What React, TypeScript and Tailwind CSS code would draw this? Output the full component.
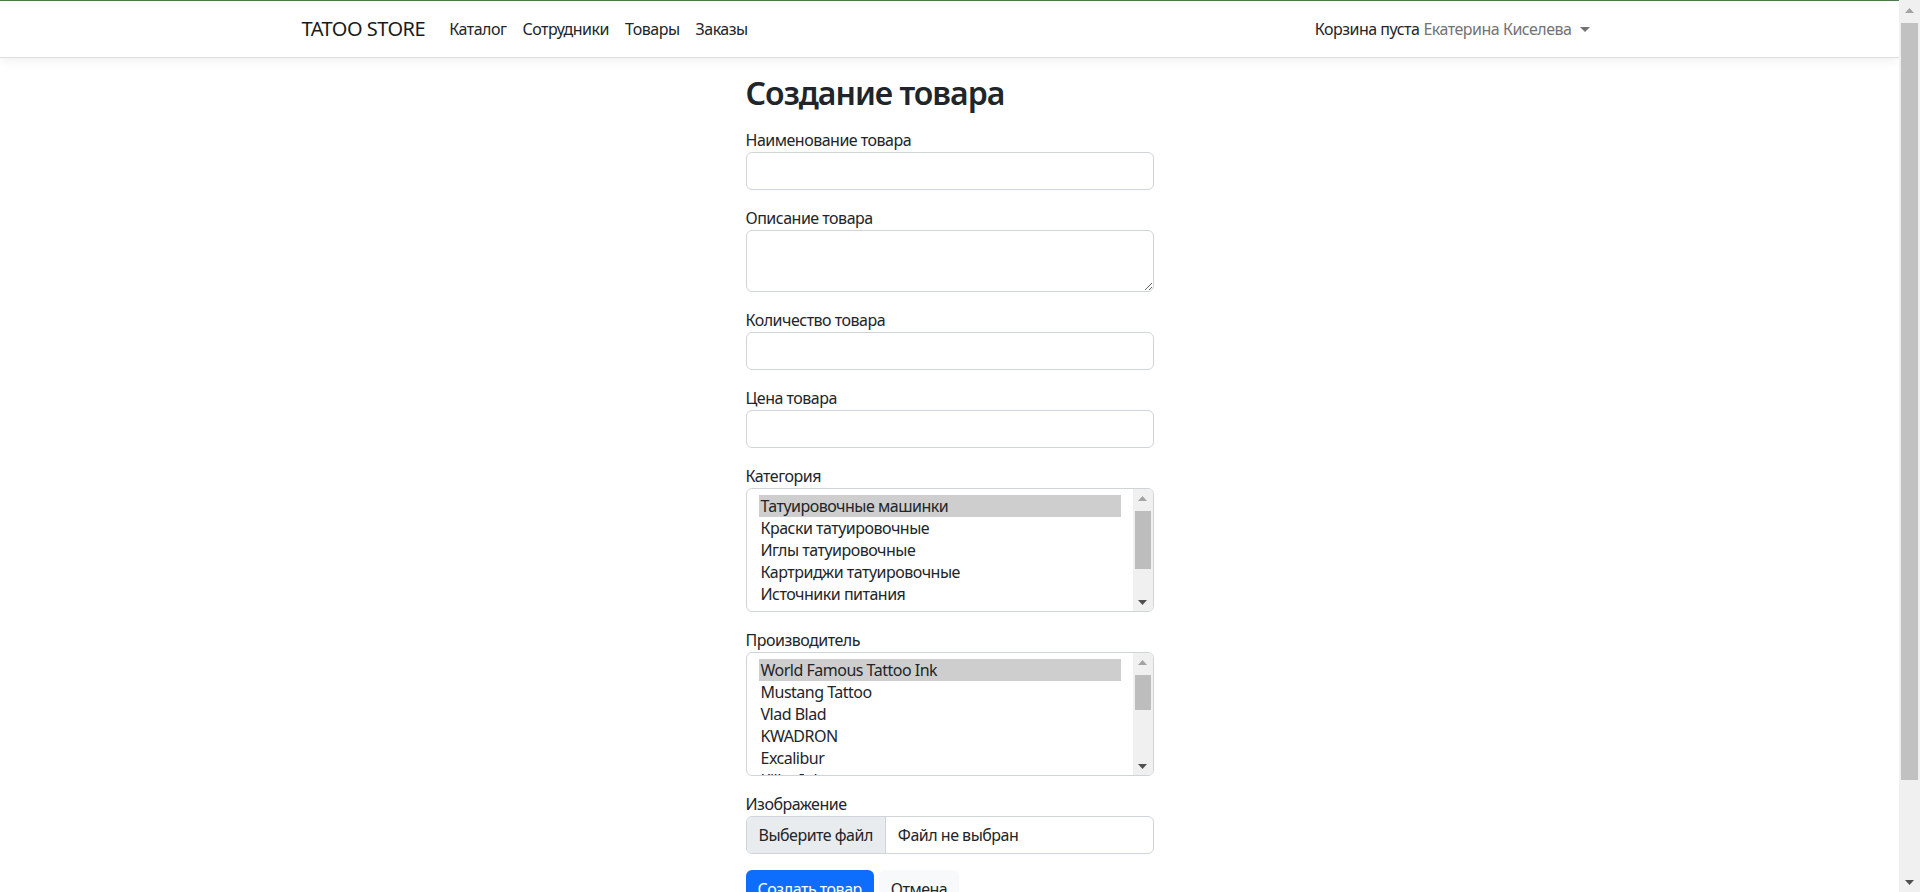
import React from "react";

const FONT = { fontFamily: '"Noto Sans", "Open Sans", Arial, sans-serif' };

function UpArrow({ color }: { color: string }) {
  return (
    <svg width="9" height="5" viewBox="0 0 9 5">
      <path d="M0 5 L4.5 0 L9 5 Z" fill={color} />
    </svg>
  );
}

function DownArrow({ color }: { color: string }) {
  return (
    <svg width="9" height="5" viewBox="0 0 9 5">
      <path d="M0 0 L4.5 5 L9 0 Z" fill={color} />
    </svg>
  );
}

function ListBox({
  items,
  thumbTop,
  thumbHeight,
}: {
  items: string[];
  thumbTop: number;
  thumbHeight: number;
}) {
  return (
    <div className="h-[124px] border border-[#ced4da] rounded-[6px] flex overflow-hidden bg-white">
      <div className="flex-1 pt-[6px] pl-3 pr-[12px] overflow-hidden">
        {items.map((it, i) => (
          <div
            key={it}
            className={`h-[22px] leading-[22px] px-[2px] text-[16px] text-[#212529] whitespace-nowrap ${
              i === 0 ? "bg-[#cecece]" : ""
            }`}
          >
            {it}
          </div>
        ))}
      </div>
      <div className="w-[20px] bg-[#f0f0f0] flex flex-col items-center">
        <div className="h-[18px] flex items-center justify-center">
          <UpArrow color="#a3a3a3" />
        </div>
        <div style={{ height: thumbTop - 18 }} />
        <div className="w-[16px] bg-[#bdbdbd]" style={{ height: thumbHeight }} />
        <div className="flex-1" />
        <div className="h-[18px] flex items-center justify-center">
          <DownArrow color="#505050" />
        </div>
      </div>
    </div>
  );
}

function Label({ children }: { children: React.ReactNode }) {
  return <div className="text-[16px] leading-[24px] text-[#212529]">{children}</div>;
}

function Input() {
  return <div className="h-[38px] border border-[#ced4da] rounded-[6px] bg-white" />;
}

export default function App() {
  return (
    <div
      className="w-[1920px] h-[892px] flex overflow-hidden bg-white tracking-[-0.5px]"
      style={FONT}
    >
      <div className="w-[1899px] flex flex-col overflow-hidden">
        <div className="h-px bg-[#4c7c50]" />
        <nav className="h-[57px] border-b border-[#dedede] bg-white shadow-[0_3px_10px_rgba(0,0,0,0.06)] relative z-10">
          <div className="w-[1320px] mx-auto px-3 h-full flex items-center">
            <span className="text-[20px] text-[#1a1a1a] mr-4">TATOO STORE</span>
            <div className="flex text-[16px] text-[#212529]">
              <span className="px-2">Каталог</span>
              <span className="px-2">Сотрудники</span>
              <span className="px-2">Товары</span>
              <span className="px-2">Заказы</span>
            </div>
            <div className="ml-auto flex items-center text-[16px]">
              <span className="text-[#212529]">Корзина пуста</span>
              <span className="pl-1 pr-2 text-[#737373] flex items-center">
                Екатерина Киселева
                <span className="inline-block ml-[8px] w-0 h-0 border-x-[5px] border-x-transparent border-t-[5px] border-t-[#737373]" />
              </span>
            </div>
          </div>
        </nav>
        <main className="flex-1 overflow-hidden">
          <div className="w-[408px] mx-auto pt-4">
            <h2 className="text-[32px] leading-[38px] font-semibold text-[#212529] mb-4 tracking-[-1px]">
              Создание товара
            </h2>
            <div className="flex flex-col gap-4">
              <div>
                <Label>Наименование товара</Label>
                <Input />
              </div>
              <div>
                <Label>Описание товара</Label>
                <textarea className="block w-full h-[62px] border border-[#ced4da] rounded-[6px] resize-y outline-none" />
              </div>
              <div>
                <Label>Количество товара</Label>
                <Input />
              </div>
              <div>
                <Label>Цена товара</Label>
                <Input />
              </div>
              <div>
                <Label>Категория</Label>
                <ListBox
                  items={[
                    "Татуировочные машинки",
                    "Краски татуировочные",
                    "Иглы татуировочные",
                    "Картриджи татуировочные",
                    "Источники питания",
                  ]}
                  thumbTop={22}
                  thumbHeight={58}
                />
              </div>
              <div>
                <Label>Производитель</Label>
                <ListBox
                  items={[
                    "World Famous Tattoo Ink",
                    "Mustang Tattoo",
                    "Vlad Blad",
                    "KWADRON",
                    "Excalibur",
                    "Killer Ink",
                  ]}
                  thumbTop={22}
                  thumbHeight={35}
                />
              </div>
              <div>
                <Label>Изображение</Label>
                <div className="h-[38px] border border-[#ced4da] rounded-[6px] flex items-center overflow-hidden text-[16px] text-[#212529]">
                  <div className="h-full bg-[#e9ecef] border-r border-[#ced4da] px-3 flex items-center">
                    Выберите файл
                  </div>
                  <span className="ml-3">Файл не выбран</span>
                </div>
              </div>
              <div className="flex gap-[5px]">
                <button className="h-[38px] px-3 rounded-[6px] bg-[#0d6efd] text-white text-[16px]">
                  Создать товар
                </button>
                <button className="h-[38px] px-3 rounded-[6px] bg-[#f8f9fa] text-[#212529] text-[16px]">
                  Отмена
                </button>
              </div>
            </div>
          </div>
        </main>
      </div>
      <div className="w-[21px] bg-[#f0f0f0] flex flex-col items-center">
        <div className="h-[20px] flex items-center justify-center">
          <UpArrow color="#a3a3a3" />
        </div>
        <div className="h-[3px]" />
        <div className="w-[17px] h-[757px] bg-[#c1c1c1]" />
        <div className="flex-1" />
        <div className="h-[20px] flex items-center justify-center">
          <DownArrow color="#505050" />
        </div>
      </div>
    </div>
  );
}
